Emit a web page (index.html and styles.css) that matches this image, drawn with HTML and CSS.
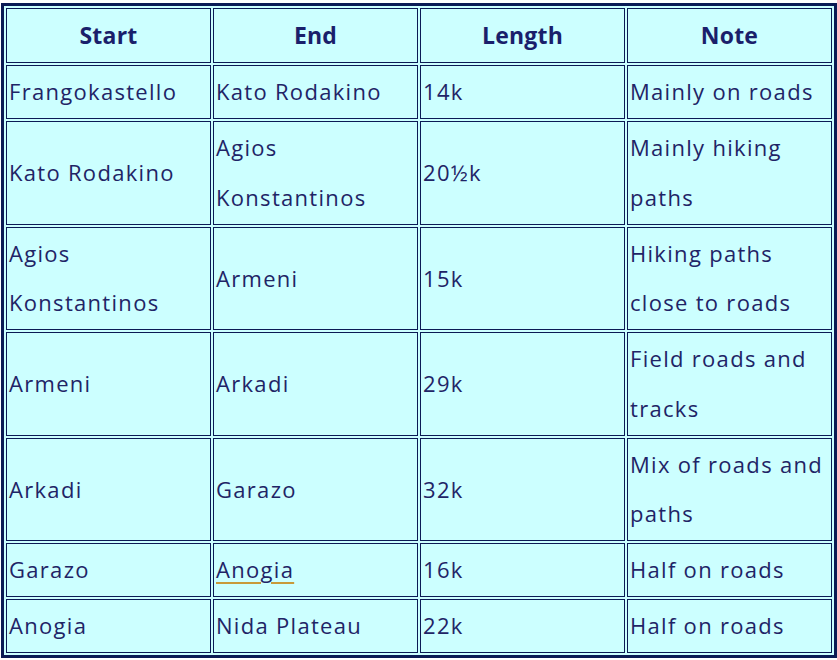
FILE: index.html
```html
<!DOCTYPE html>
<html>
<head>
<meta charset="utf-8">
<link rel="stylesheet" href="styles.css">
</head>
<body>
<table class="routes">
  <thead>
    <tr><th>Start</th><th>End</th><th>Length</th><th>Note</th></tr>
  </thead>
  <tbody>
    <tr><td>Frangokastello</td><td>Kato Rodakino</td><td>14k</td><td>Mainly on roads</td></tr>
    <tr><td>Kato Rodakino</td><td>Agios Konstantinos</td><td>20½k</td><td>Mainly hiking paths</td></tr>
    <tr><td>Agios Konstantinos</td><td>Armeni</td><td>15k</td><td>Hiking paths close to roads</td></tr>
    <tr><td>Armeni</td><td>Arkadi</td><td>29k</td><td>Field roads and tracks</td></tr>
    <tr><td>Arkadi</td><td>Garazo</td><td>32k</td><td>Mix of roads and paths</td></tr>
    <tr><td>Garazo</td><td><a class="place-link" href="#">Anogia</a></td><td>16k</td><td>Half on roads</td></tr>
    <tr><td>Anogia</td><td>Nida Plateau</td><td>22k</td><td>Half on roads</td></tr>
  </tbody>
</table>
</body>
</html>
```

FILE: styles.css
```css
html, body {
  margin: 0;
  padding: 0;
  background: #ffffff;
}
body {
  padding: 3px 0 0 1px;
}
.routes {
  width: 836px;
  table-layout: fixed;
  border-collapse: separate;
  border-spacing: 2px;
  border: 3px solid #0b1a55;
  background: #ccffff;
  font-family: "Open Sans", Lato, sans-serif;
  font-size: 22px;
  letter-spacing: 1.3px;
  color: #1f2466;
}
.routes th,
.routes td {
  border: 1px solid #0b1a55;
  padding: 1.25px 2px;
  line-height: 49.5px;
  vertical-align: middle;
  text-align: left;
}
.routes th {
  padding: 1px 2px;
  text-align: center;
  font-weight: bold;
  font-size: 23px;
  letter-spacing: 0.2px;
  color: #1a1f6b;
  line-height: 51px;
}
.place-link {
  color: inherit;
  text-decoration: underline;
  text-decoration-color: #c89a3a;
  text-underline-offset: 4px;
}
```
